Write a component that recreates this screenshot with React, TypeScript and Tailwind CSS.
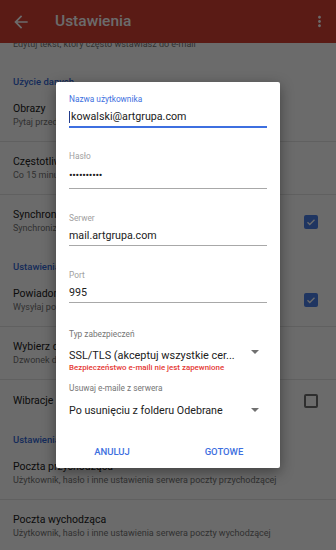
import React from 'react'

const BLUE = '#3d6fe0'

function Check({ on }: { on: boolean }) {
  if (on)
    return (
      <div className="flex h-[14px] w-[14px] shrink-0 items-center justify-center rounded-[2px] bg-[#4a7ee6]">
        <svg viewBox="0 0 24 24" className="h-[12px] w-[12px]" fill="none" stroke="#fff" strokeWidth="2.6">
          <path d="M5 12.5l4.5 4.5L19 7.5" />
        </svg>
      </div>
    )
  return <div className="h-[14px] w-[14px] shrink-0 rounded-[2px] border-2 border-[#6e6e6e]" />
}

function Item({ title, sub, check, last }: { title: string; sub: string; check?: boolean; last?: boolean }) {
  return (
    <div className={`flex h-[53px] items-center pl-[13px] pr-[18px] ${last ? 'h-[52px]' : 'border-b border-[#e4e4e4]'}`}>
      <div className="flex h-full min-w-0 flex-1 flex-col pt-[13px]">
        <div className="truncate text-[10.5px] leading-[14px] text-[#212121]">{title}</div>
        <div className="truncate text-[9px] leading-[12px] text-[#757575]">{sub}</div>
      </div>
      {check !== undefined && <Check on={check} />}
    </div>
  )
}

function Section({ label }: { label: string }) {
  return (
    <div className="h-[26px] pl-[13px] pt-[13px] text-[9.5px] font-medium leading-[12px] text-[#3367d6]">{label}</div>
  )
}

function Arrow({ up }: { up: number }) {
  return (
    <svg viewBox="0 0 8 4" className="mr-[8px] h-[4px] w-[8px] shrink-0" style={{ marginBottom: up }}>
      <path d="M0 0h8L4 4z" fill="#707070" />
    </svg>
  )
}

export default function App() {
  return (
    <div className="relative h-[550px] w-[336px] overflow-hidden bg-white font-['Roboto',sans-serif]">
      <header className="relative z-10 flex h-[43px] items-center bg-[#d64034] text-white">
        <svg viewBox="0 0 24 24" className="ml-[11px] h-[20px] w-[20px]" fill="#fff">
          <path d="M20 11H7.83l5.59-5.59L12 4l-8 8 8 8 1.41-1.41L7.83 13H20v-2z" />
        </svg>
        <h1 className="ml-[24px] flex-1 text-[15.5px] font-medium">Ustawienia</h1>
        <svg viewBox="0 0 24 24" className="mr-[8px] h-[17px] w-[17px]" fill="#fff">
          <path d="M12 8c1.1 0 2-.9 2-2s-.9-2-2-2-2 .9-2 2 .9 2 2 2zm0 2c-1.1 0-2 .9-2 2s.9 2 2 2 2-.9 2-2-.9-2-2-2zm0 6c-1.1 0-2 .9-2 2s.9 2 2 2 2-.9 2-2-.9-2-2-2z" />
        </svg>
      </header>

      {/* settings list under the dialog */}
      <div>
        <div className="h-[20px] overflow-hidden pl-[13px]">
          <div className="-mt-[5px] text-[9px] leading-[12px] text-[#757575]">Edytuj tekst, który często wstawiasz do e-mail</div>
        </div>
        <Section label="Użycie danych" />
        <Item title="Obrazy" sub="Pytaj przed wyświetleniem obrazów" />
        <Item title="Częstotliwość synchronizacji" sub="Co 15 minut" />
        <Item title="Synchronizuj e-maile" sub="Synchronizuj e-maile z tego konta" check={true} last />
        <Section label="Ustawienia powiadomień" />
        <Item title="Powiadomienia e-mail" sub="Wysyłaj powiadomienie o nowym e-mailu" check={true} />
        <Item title="Wybierz dzwonek" sub="Dzwonek domyślny (Pixie Dust)" />
        <div className="flex h-[41px] items-center pl-[13px] pr-[18px]">
          <div className="flex-1 text-[10.5px] leading-[14px] text-[#212121]">Wibracje</div>
          <Check on={false} />
        </div>
        <Section label="Ustawienia serwera" />
        <Item title="Poczta przychodząca" sub="Użytkownik, hasło i inne ustawienia serwera poczty przychodzącej" />
        <Item title="Poczta wychodząca" sub="Użytkownik, hasło i inne ustawienia serwera poczty wychodzącej" />
      </div>

      <div className="absolute inset-0 z-20 bg-black/[0.58]" />

      <div className="absolute inset-0 z-30 flex items-center justify-center">
        <div className="flex h-[386px] w-[224px] flex-col rounded-[2px] bg-white px-[13px] pt-[12px] shadow-[0_4px_14px_rgba(0,0,0,0.4)]">
          <div className="border-b-2" style={{ borderColor: BLUE }}>
            <div className="h-[10px] text-[8.3px] leading-[10px]" style={{ color: BLUE }}>Nazwa użytkownika</div>
            <div className="mt-[6px] flex items-center pb-[2px] text-[10.7px] leading-[14px] text-[#212121]">
              <span className="mr-[1px] inline-block h-[12px] w-[1px] bg-[#233c8c]" />
              kowalski@artgrupa.com
            </div>
          </div>

          <div className="mt-[23px] border-b border-[#a8a8a8]">
            <div className="h-[10px] text-[8.3px] leading-[10px] text-[#a0a0a0]">Hasło</div>
            <div className="mt-[8px] pb-[5px] text-[10.7px] leading-[14px] tracking-[-0.3px] text-[#212121]">••••••••••</div>
          </div>

          <div className="mt-[24px] border-b border-[#a8a8a8]">
            <div className="h-[10px] text-[8.3px] leading-[10px] text-[#a0a0a0]">Serwer</div>
            <div className="mt-[6px] pb-[2px] text-[10.7px] leading-[14px] text-[#212121]">mail.artgrupa.com</div>
          </div>

          <div className="mt-[24px] border-b border-[#a8a8a8]">
            <div className="h-[10px] text-[8.3px] leading-[10px] text-[#a0a0a0]">Port</div>
            <div className="mt-[6px] pb-[2px] text-[10.7px] leading-[14px] text-[#212121]">995</div>
          </div>

          <div className="mt-[26px] h-[10px] text-[8.3px] leading-[10px] text-[#757575]">Typ zabezpieczeń</div>
          <div className="mt-[10px] flex h-[14px] items-center">
            <div className="flex-1 truncate text-[10.9px] leading-[14px] text-[#212121]">SSL/TLS (akceptuj wszystkie cer...</div>
            <Arrow up={8} />
          </div>
          <div className="whitespace-nowrap text-[7.9px] font-medium leading-[10px] text-[#e53935]">Bezpieczeństwo e-maili nie jest zapewnione</div>

          <div className="mt-[10px] h-[10px] text-[8.3px] leading-[10px] text-[#757575]">Usuwaj e-maile z serwera</div>
          <div className="mt-[11px] flex h-[14px] items-center">
            <div className="flex-1 truncate text-[10.7px] leading-[14px] text-[#212121]">Po usunięciu z folderu Odebrane</div>
            <Arrow up={2} />
          </div>

          <div className="-mx-[13px] mt-[20px] grid h-[28px] grid-cols-2 text-[9.5px] font-medium" style={{ color: BLUE }}>
            <button className="flex items-center justify-center">ANULUJ</button>
            <button className="flex items-center justify-center">GOTOWE</button>
          </div>
        </div>
      </div>
    </div>
  )
}
